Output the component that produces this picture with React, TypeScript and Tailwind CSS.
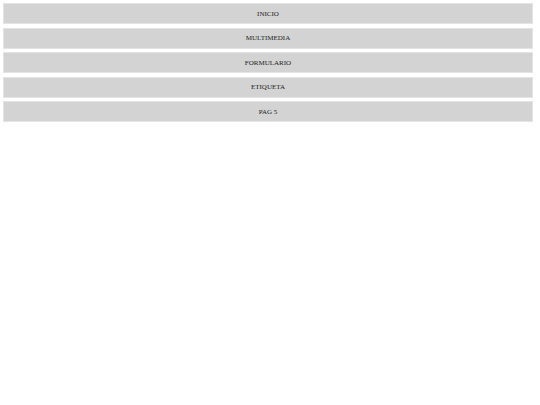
const ITEMS = ["INICIO", "MULTIMEDIA", "FORMULARIO", "ETIQUETA", "PAG 5"];

export default function App() {
  return (
    <div className="min-h-screen bg-white font-['Liberation_Serif',serif]">
      <nav className="pt-[3px] pl-[3px]">
        <ul className="flex w-[530px] flex-col gap-[3.5px]">
          {ITEMS.map((item) => (
            <li
              key={item}
              className="flex h-[21px] items-center justify-center border border-[#e4e4e4] bg-[#d3d3d3] pt-px text-[7px] text-[#222]"
            >
              <a href="#">{item}</a>
            </li>
          ))}
        </ul>
      </nav>
    </div>
  );
}
